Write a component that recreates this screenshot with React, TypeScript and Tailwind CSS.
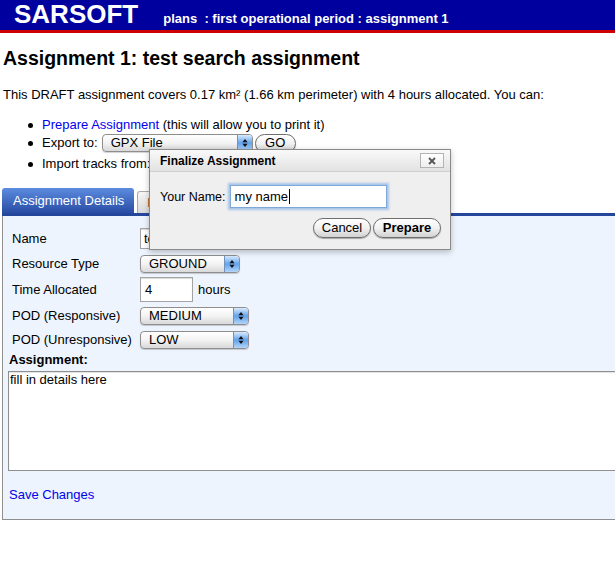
import React from "react";

function Arrows() {
  return (
    <svg width="6" height="10" viewBox="0 0 6 10">
      <path d="M3 1 L5.6 4.2 L0.4 4.2 Z" fill="#111" />
      <path d="M3 9 L5.6 5.8 L0.4 5.8 Z" fill="#111" />
    </svg>
  );
}

function AquaSelect({ value, className }: { value: string; className: string }) {
  return (
    <div
      className={`flex h-[18px] items-stretch rounded-[4px] border border-[#8e8e8e] bg-gradient-to-b from-white via-[#f3f3f3] to-[#d9d9d9] shadow-[0_1px_1px_rgba(0,0,0,0.18)] ${className}`}
    >
      <div className="flex flex-1 items-center pl-[8px] text-[13px] leading-[16px] text-black">{value}</div>
      <div className="flex w-[15px] items-center justify-center rounded-r-[3px] border-l border-[#7292bd] bg-gradient-to-b from-[#d9ebfd] via-[#62a2ea] to-[#b3d5f8]">
        <Arrows />
      </div>
    </div>
  );
}

function PillButton({ label, className }: { label: string; className: string }) {
  return (
    <div
      className={`flex items-center justify-center rounded-full border border-[#6e6e6e] bg-gradient-to-b from-white via-[#f1f1f1] to-[#d2d2d2] text-[13px] leading-[16px] text-black shadow-[0_1px_1px_rgba(0,0,0,0.3)] ${className}`}
    >
      {label}
    </div>
  );
}

export default function App() {
  return (
    <div className="relative h-[570px] w-[615px] overflow-hidden bg-white font-['Liberation_Sans',Arial,Helvetica,sans-serif] text-[13px] text-black">
      {/* Header */}
      <header className="flex h-[33px] items-baseline border-b-[3px] border-[#cc0000] bg-[#00009e] pl-[14px] pt-[1px]">
        <span className="text-[26px] font-bold leading-[26px] text-white">SARSOFT</span>
        <span className="ml-[25px] whitespace-pre text-[13px] font-bold leading-[16px] text-white">
          plans  : first operational period : assignment 1
        </span>
      </header>

      <h1 className="ml-[3px] mt-[13px] text-[19.5px] font-bold leading-[24px]">
        Assignment 1: test search assignment
      </h1>

      <p className="ml-[3px] mt-[17px] leading-[16px]">
        This DRAFT assignment covers 0.17 km² (1.66 km perimeter) with 4 hours allocated. You can:
      </p>

      <ul className="ml-[3px] mt-[13px]">
        <li className="flex h-[18px] items-center pl-[25px]">
          <span className="mr-[9px] h-[5px] w-[5px] rounded-full bg-black" />
          <span className="leading-[16px]">
            <span className="text-[#0000ee]">Prepare Assignment</span> (this will allow you to print it)
          </span>
        </li>
        <li className="flex h-[18px] items-center pl-[25px]">
          <span className="mr-[9px] h-[5px] w-[5px] rounded-full bg-black" />
          <span className="leading-[16px]">Export to:</span>
          <AquaSelect value="GPX File" className="ml-[4px] w-[151px]" />
          <PillButton label="GO" className="ml-[2px] h-[19px] w-[41px]" />
        </li>
        <li className="flex h-[24px] items-center pl-[25px]">
          <span className="mr-[9px] h-[5px] w-[5px] rounded-full bg-black" />
          <span className="leading-[16px]">Import tracks from:</span>
        </li>
      </ul>

      {/* Tabs */}
      <div className="mt-[12px] flex h-[25px] items-end pl-[2px]">
        <div className="flex h-[25px] w-[132px] items-center rounded-t-[3px] bg-gradient-to-b from-[#5c8ce0] to-[#2a4ca4] pl-[11px] text-[13px] leading-[16px] text-white">
          Assignment Details
        </div>
        <div className="ml-[3px] flex h-[22px] w-[90px] items-center rounded-t-[3px] border border-b-0 border-[#a9a9a9] bg-gradient-to-b from-[#f6f6f6] to-[#d9d9d9] pl-[9px] text-[13px] leading-[16px] text-[#b0601e]">
          I
        </div>
      </div>
      <div className="ml-[2px] h-[3px] bg-[#24479c]" />

      {/* Panel */}
      <div className="ml-[2px] w-[640px] border-b border-l border-[#8f8f8f] bg-[#edf4fd] pb-[16px] pl-[6px] pt-[10px]">
        <div className="flex h-[26px] items-start pt-[2px]">
          <div className="w-[131px] pl-[3px] pt-[3px] leading-[16px]">Name</div>
          <div className="flex h-[21px] w-[220px] items-center border border-[#a3a3a3] bg-white pl-[3px] leading-[16px] shadow-[inset_0_1px_1px_rgba(0,0,0,0.15)]">
            test search assignment
          </div>
        </div>
        <div className="flex h-[24px] items-center">
          <div className="w-[131px] pl-[3px] leading-[16px]">Resource Type</div>
          <AquaSelect value="GROUND" className="w-[100px]" />
        </div>
        <div className="flex h-[27px] items-center">
          <div className="w-[131px] pl-[3px] leading-[16px]">Time Allocated</div>
          <div className="flex h-[25px] w-[53px] items-center border border-[#a3a3a3] bg-white pl-[4px] leading-[16px] shadow-[inset_0_1px_1px_rgba(0,0,0,0.15)]">
            4
          </div>
          <span className="ml-[5px] leading-[16px]">hours</span>
        </div>
        <div className="flex h-[25px] items-center">
          <div className="w-[131px] pl-[3px] leading-[16px]">POD (Responsive)</div>
          <AquaSelect value="MEDIUM" className="w-[109px]" />
        </div>
        <div className="flex h-[24px] items-center">
          <div className="w-[131px] pl-[3px] leading-[16px]">POD (Unresponsive)</div>
          <AquaSelect value="LOW" className="w-[109px]" />
        </div>

        <div className="font-bold leading-[16px]">Assignment:</div>
        <div className="ml-[-1px] mt-[3px] h-[100px] w-[640px] border border-[#8f8f8f] bg-white pl-[1px] text-[13px] leading-[15px] shadow-[inset_0_1px_1px_rgba(0,0,0,0.12)]">
          fill in details here
        </div>

        <div className="mt-[16px] leading-[16px] text-[#0000ee]">Save Changes</div>
      </div>

      {/* Dialog */}
      <div className="absolute left-[149px] top-[149px] h-[101px] w-[302px] border border-[#8a8a8a] bg-[#efefef] shadow-[0_2px_6px_rgba(0,0,0,0.25)]">
        <div className="flex h-[22px] items-center justify-between border-b border-[#cfcfcf] bg-gradient-to-b from-[#f9f9f9] to-[#e2e2e2] pl-[10px] pr-[6px]">
          <span className="text-[12px] font-bold leading-[14px]">Finalize Assignment</span>
          <div className="flex h-[15px] w-[24px] items-center justify-center border border-[#b3b3b3] bg-gradient-to-b from-white to-[#eeeeee]">
            <svg width="8" height="8" viewBox="0 0 8 8">
              <path d="M1 1 L7 7 M7 1 L1 7" stroke="#555" strokeWidth="1.8" />
            </svg>
          </div>
        </div>
        <div className="pl-[10px] pr-[9px] pt-[13px]">
          <div className="flex items-center">
            <span className="text-[12.5px] leading-[16px]">Your Name:</span>
            <div className="ml-[4px] flex h-[23px] w-[157px] items-center border border-[#7ea8da] bg-white pl-[4px] text-[13px] leading-[16px] shadow-[0_0_2px_2px_rgba(110,160,225,0.55)]">
              my name
              <span className="ml-[1px] h-[15px] w-[1px] bg-black" />
            </div>
          </div>
          <div className="mt-[10px] flex justify-end gap-[2px]">
            <PillButton label="Cancel" className="h-[20px] w-[58px]" />
            <PillButton label="Prepare" className="h-[20px] w-[68px] font-bold" />
          </div>
        </div>
      </div>
    </div>
  );
}
